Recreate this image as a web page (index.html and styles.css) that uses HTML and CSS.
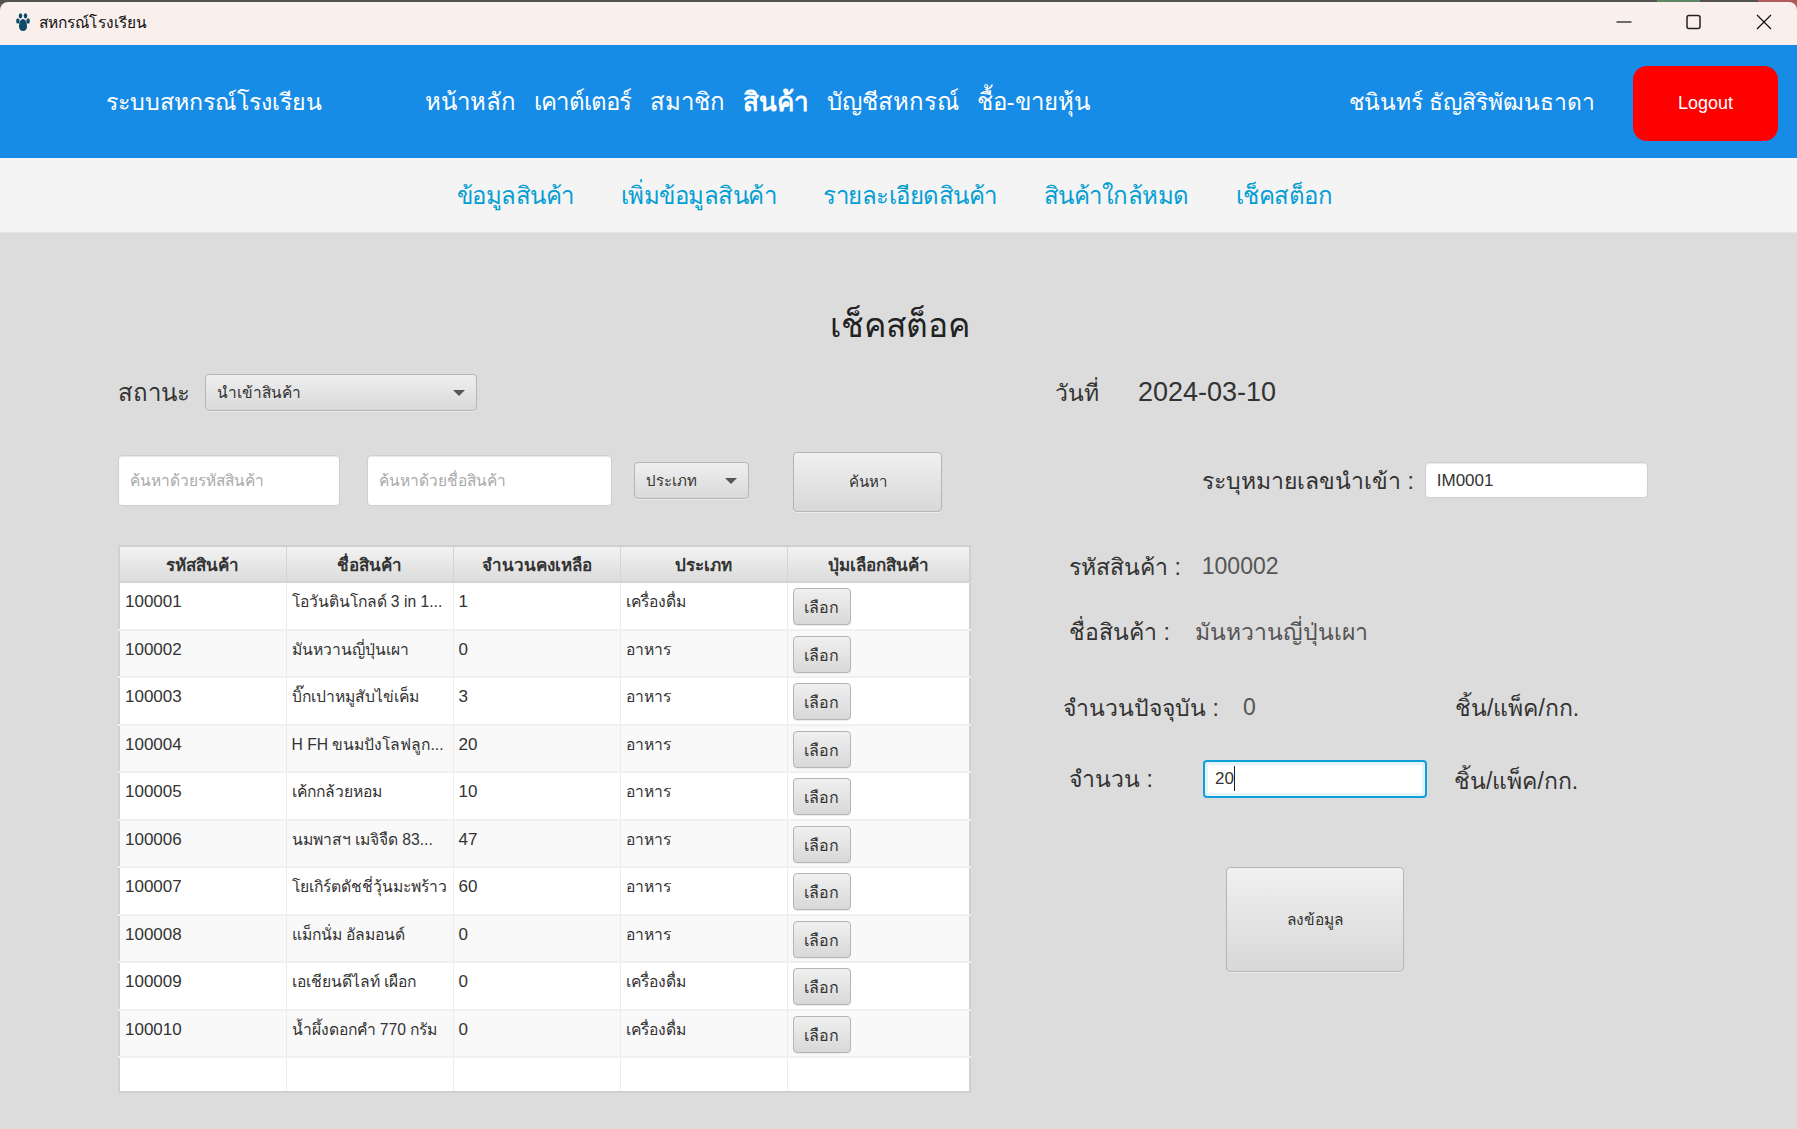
FILE: index.html
```html
<!DOCTYPE html>
<html lang="th">
<head>
  <meta charset="UTF-8" />
  <title>สหกรณ์โรงเรียน</title>
  <link rel="stylesheet" href="styles.css">
</head>
<body>
  <div class="window-top">
    <header class="titlebar">
      <svg class="app-icon" viewBox="0 0 14 18" width="14" height="18">
        <ellipse cx="4.500" cy="2.800" rx="1.800" ry="2.600" fill="#0f4a68"/>
        <ellipse cx="9.500" cy="2.800" rx="1.800" ry="2.600" fill="#0f4a68"/>
        <ellipse cx="1.900" cy="8" rx="1.800" ry="2.800" fill="#0f4a68"/>
        <ellipse cx="12.100" cy="8" rx="1.800" ry="2.800" fill="#0f4a68"/>
        <path d="M7 6c2.700 0 4 4 4 7.500C11 16.500 9 18 7 18s-4-1.500-4-4.500C3 10 4.300 6 7 6z" fill="#0f4a68"/>
      </svg>
      <span class="app-title">สหกรณ์โรงเรียน</span>
      <div class="win-controls">
        <svg viewBox="0 0 16 16" width="16" height="16"><path d="M0.500 8h15" stroke="#111" stroke-width="1.200"/></svg>
        <svg viewBox="0 0 16 16" width="16" height="16"><rect x="1" y="1.500" width="13" height="13" rx="2" fill="none" stroke="#222" stroke-width="1.500"/></svg>
        <svg viewBox="0 0 16 16" width="16" height="16"><path d="M1 1l14 14M15 1L1 15" stroke="#111" stroke-width="1.200"/></svg>
      </div>
    </header>
  </div>

  <nav class="navbar">
    <span class="brand">ระบบสหกรณ์โรงเรียน</span>
    <a>หน้าหลัก</a>
    <a class="tight">เคาต์เตอร์</a>
    <a>สมาชิก</a>
    <a class="active">สินค้า</a>
    <a>บัญชีสหกรณ์</a>
    <a>ชื้อ-ขายหุ้น</a>
    <span class="user">ชนินทร์ ธัญสิริพัฒนธาดา</span>
    <button class="logout">Logout</button>
  </nav>

  <nav class="subnav">
    <a>ข้อมูลสินค้า</a>
    <a>เพิ่มข้อมูลสินค้า</a>
    <a>รายละเอียดสินค้า</a>
    <a>สินค้าใกล้หมด</a>
    <a>เช็คสต็อก</a>
  </nav>

  <main class="content">
    <h1>เช็คสต็อค</h1>
    <div class="columns">
      <section class="left">
        <div class="status-row">
          <label>สถานะ</label>
          <div class="select select-status">นำเข้าสินค้า<i class="caret"></i></div>
        </div>
        <div class="search-row">
          <input class="field field-code" placeholder="ค้นหาด้วยรหัสสินค้า" />
          <input class="field field-name" placeholder="ค้นหาด้วยชื่อสินค้า" />
          <div class="select select-type">ประเภท<i class="caret"></i></div>
          <button class="btn btn-search">ค้นหา</button>
        </div>
        <table class="stock">
          <thead>
            <tr><th>รหัสสินค้า</th><th>ชื่อสินค้า</th><th>จำนวนคงเหลือ</th><th>ประเภท</th><th>ปุ่มเลือกสินค้า</th></tr>
          </thead>
          <tbody>
            <tr><td>100001</td><td>โอวันตินโกลด์ 3 in 1...</td><td>1</td><td>เครื่องดื่ม</td><td><button class="btn btn-pick">เลือก</button></td></tr>
            <tr><td>100002</td><td>มันหวานญี่ปุ่นเผา</td><td>0</td><td>อาหาร</td><td><button class="btn btn-pick">เลือก</button></td></tr>
            <tr><td>100003</td><td>บิ๊กเปาหมูสับไข่เค็ม</td><td>3</td><td>อาหาร</td><td><button class="btn btn-pick">เลือก</button></td></tr>
            <tr><td>100004</td><td>H FH ขนมปังโลฟลูก...</td><td>20</td><td>อาหาร</td><td><button class="btn btn-pick">เลือก</button></td></tr>
            <tr><td>100005</td><td>เค้กกล้วยหอม</td><td>10</td><td>อาหาร</td><td><button class="btn btn-pick">เลือก</button></td></tr>
            <tr><td>100006</td><td>นมพาสฯ เมจิจืด 83...</td><td>47</td><td>อาหาร</td><td><button class="btn btn-pick">เลือก</button></td></tr>
            <tr><td>100007</td><td>โยเกิร์ตดัชชี่วุ้นมะพร้าว</td><td>60</td><td>อาหาร</td><td><button class="btn btn-pick">เลือก</button></td></tr>
            <tr><td>100008</td><td>แม็กนั่ม อัลมอนด์</td><td>0</td><td>อาหาร</td><td><button class="btn btn-pick">เลือก</button></td></tr>
            <tr><td>100009</td><td>เอเชียนดีไลท์ เผือก</td><td>0</td><td>เครื่องดื่ม</td><td><button class="btn btn-pick">เลือก</button></td></tr>
            <tr><td>100010</td><td>น้ำผึ้งดอกคำ 770 กรัม</td><td>0</td><td>เครื่องดื่ม</td><td><button class="btn btn-pick">เลือก</button></td></tr>
            <tr class="empty"><td></td><td></td><td></td><td></td><td></td></tr>
          </tbody>
        </table>
      </section>

      <section class="right">
        <div class="date-row"><span>วันที่</span><span class="date">2024-03-10</span></div>
        <div class="import-row">
          <label>ระบุหมายเลขนำเข้า :</label>
          <input class="field field-import" value="IM0001" />
        </div>
        <div class="info-row code-row"><label>รหัสสินค้า :</label><span class="value">100002</span></div>
        <div class="info-row name-row"><label>ชื่อสินค้า :</label><span class="value">มันหวานญี่ปุ่นเผา</span></div>
        <div class="info-row now-row"><label>จำนวนปัจจุบัน :</label><span class="value">0</span><span class="unit">ชิ้น/แพ็ค/กก.</span></div>
        <div class="info-row qty-row">
          <label>จำนวน :</label>
          <div class="qty-input">20<i class="text-caret"></i></div>
          <span class="unit">ชิ้น/แพ็ค/กก.</span>
        </div>
        <button class="btn btn-save">ลงข้อมูล</button>
      </section>
    </div>
  </main>
</body>
</html>
```

FILE: styles.css
```css
* {
  box-sizing: border-box;
}
html, body {
  margin: 0;
  height: 100%;
}
body {
  background: #dcdcdc;
  color: #333;
  font-family: "Liberation Sans", "Noto Sans", "DejaVu Sans", sans-serif;
  overflow: hidden;
}

/* window title */
.window-top {
  padding-top: 2px;
  background: linear-gradient(to right, #55534f 1657px, #5f8763 1657px, #5f8763 1700px, #55534f 1700px, #55534f 1758px, #b05a5a 1758px);
}
.titlebar {
  height: 43px;
  background: #f9f0ed;
  border-radius: 8px 8px 0 0;
  display: flex;
  align-items: center;
  padding: 0 0 3px 16px;
  color: #111;
  font-size: 15.500px;
  letter-spacing: 0.100px;
}
.app-icon {
  margin-right: 9px;
}
.win-controls {
  margin-left: auto;
  display: flex;
  gap: 54px;
  padding-right: 25px;
}

/* top menu */
.navbar {
  height: 113px;
  background: #178ce6;
  color: #fff;
  display: flex;
  align-items: center;
  padding-left: 106px;
  font-size: 24px;
}
.brand {
  width: 319px;
  font-size: 23.200px;
}
.navbar a {
  margin-right: 18px;
}
.navbar a.tight {
  letter-spacing: -0.800px;
}
.navbar a.active {
  font-size: 26px;
  font-weight: bold;
}
.user {
  margin-left: auto;
  margin-right: 38px;
  font-size: 22.800px;
}
.logout {
  width: 145px;
  height: 75px;
  margin: 4px 19px 0 0;
  background: #ff0000;
  color: #fff;
  border: none;
  border-radius: 14px;
  font: 18px "Liberation Sans", sans-serif;
}

.subnav {
  height: 75px;
  background: #f4f4f4;
  border-bottom: 1px solid #e6e6e6;
  display: flex;
  justify-content: center;
  align-items: center;
  gap: 47px;
  padding: 1px 8px 0 0;
  color: #039ed3;
  font-size: 24px;
  letter-spacing: -0.500px;
}

/* page body */
.content {
  padding: 0 0 0 118px;
}
h1 {
  margin: 0;
  height: 141px;
  padding: 65px 116px 0 0;
  text-align: center;
  font-size: 33.500px;
  font-weight: normal;
  line-height: 56px;
  color: #222;
}
.columns {
  display: flex;
}
.left {
  width: 853px;
}
.right {
  flex: 1;
  font-size: 23px;
}

.status-row {
  height: 37px;
  display: flex;
  align-items: center;
  font-size: 24px;
}
.status-row label {
  width: 87px;
}
.select {
  height: 37px;
  padding: 0 11px;
  display: flex;
  align-items: center;
  justify-content: space-between;
  font-size: 15.500px;
  border: 1px solid #b5b5b5;
  border-radius: 4px;
  background: linear-gradient(#efefef, #d9d9d9);
  box-shadow: 0 1px 0 #ececec;
}
.select-status {
  width: 272px;
}
.select-type {
  width: 115px;
  margin: 0 0 3px 22px;
  font-size: 15px;
}
.caret {
  width: 0;
  height: 0;
  border: 6px solid transparent;
  border-top: 6px solid #555;
  border-bottom: 0;
}
.search-row {
  height: 60px;
  margin-top: 41px;
  display: flex;
  align-items: center;
}
.field {
  background: #fff;
  border: 1px solid #cfcfcf;
  border-radius: 4px;
  box-shadow: inset 0 1px 1px #e8e8e8;
  padding: 2px 11px 0;
  font: 17px "Liberation Sans", sans-serif;
  color: #333;
  outline: none;
}
.field::placeholder {
  color: #aaa;
}
.field-code {
  width: 222px;
  height: 51px;
  margin-bottom: 4px;
  font-size: 15.500px;
}
.field-name {
  width: 245px;
  height: 51px;
  margin: 0 0 4px 27px;
  font-size: 15.500px;
}
.btn {
  border: 1px solid #b5b5b5;
  border-radius: 4px;
  background: linear-gradient(#f0f0f0, #d8d8d8);
  box-shadow: 0 1px 0 #ececec;
  color: #333;
  font: 15px "Liberation Sans", sans-serif;
  padding: 0;
}
.btn-search {
  width: 149px;
  height: 60px;
  margin-left: 44px;
}

/* stock table */
.stock {
  width: 853px;
  margin-top: 33px;
  border-collapse: collapse;
  table-layout: fixed;
  background: #fff;
  border: 2px solid #d0d0d0;
  font-size: 17px;
}
.stock th {
  height: 36px;
  padding: 0;
  font-size: 17px;
  color: #333;
  background: linear-gradient(#f2f2f2, #dcdcdc);
  border: 1px solid #d4d4d4;
  border-bottom: 2px solid #d4d4d4;
}
.stock th:nth-child(-n+4) {
  width: 167px;
}
.stock td {
  height: 47.500px;
  padding: 9px 5px 0;
  vertical-align: top;
  border-right: 1px solid #ececec;
  border-bottom: 2px solid #f0f0f0;
  white-space: nowrap;
  overflow: hidden;
}
.stock tbody tr:nth-child(even) {
  background: #f9f9f9;
}
.stock td:nth-child(2), .stock td:nth-child(4) {
  padding-top: 6px;
  font-size: 15.700px;
}
.stock td:last-child {
  padding-top: 5px;
}
.stock tr.empty td {
  height: 35px;
  border-bottom: none;
}
.btn-pick {
  width: 58px;
  height: 37px;
  padding-top: 2px;
  font-size: 16px;
}

/* right side form */
.date-row {
  height: 37px;
  margin-left: 84px;
  display: flex;
  align-items: center;
  gap: 39px;
}
.date {
  font-size: 27px;
}
.import-row {
  height: 36px;
  margin-top: 51px;
  margin-left: 231px;
  display: flex;
  align-items: center;
  gap: 11px;
}
.import-row label {
  padding-top: 2px;
}
.field-import {
  width: 223px;
  height: 36px;
}
.info-row {
  display: flex;
  align-items: center;
  height: 37px;
}
.value {
  color: #555;
  font-size: 23px;
}
.code-row {
  margin-top: 50px;
  margin-left: 98px;
}
.code-row label {
  margin-right: 21px;
}
.name-row {
  margin-top: 28px;
  margin-left: 98px;
}
.name-row label {
  margin-right: 25px;
}
.now-row {
  margin-top: 39px;
  margin-left: 92px;
}
.now-row label {
  width: 180px;
}
.now-row .value {
  width: 212px;
}
.qty-row {
  margin-top: 34px;
  margin-left: 98px;
}
.qty-row label {
  width: 134px;
}
.qty-row .unit {
  padding-top: 4px;
}
.qty-input {
  width: 224px;
  height: 38px;
  margin-right: 27px;
  padding: 0 10px;
  display: flex;
  align-items: center;
  background: #fff;
  border: 2px solid #0f9fd8;
  border-radius: 4px;
  box-shadow: inset 0 0 0 3px #e4f3fa;
  font-size: 17px;
}
.text-caret {
  width: 1px;
  height: 25px;
  background: #222;
}
.btn-save {
  display: block;
  width: 178px;
  height: 105px;
  margin-top: 70px;
  margin-left: 255px;
  font-size: 15.500px;
}
```
